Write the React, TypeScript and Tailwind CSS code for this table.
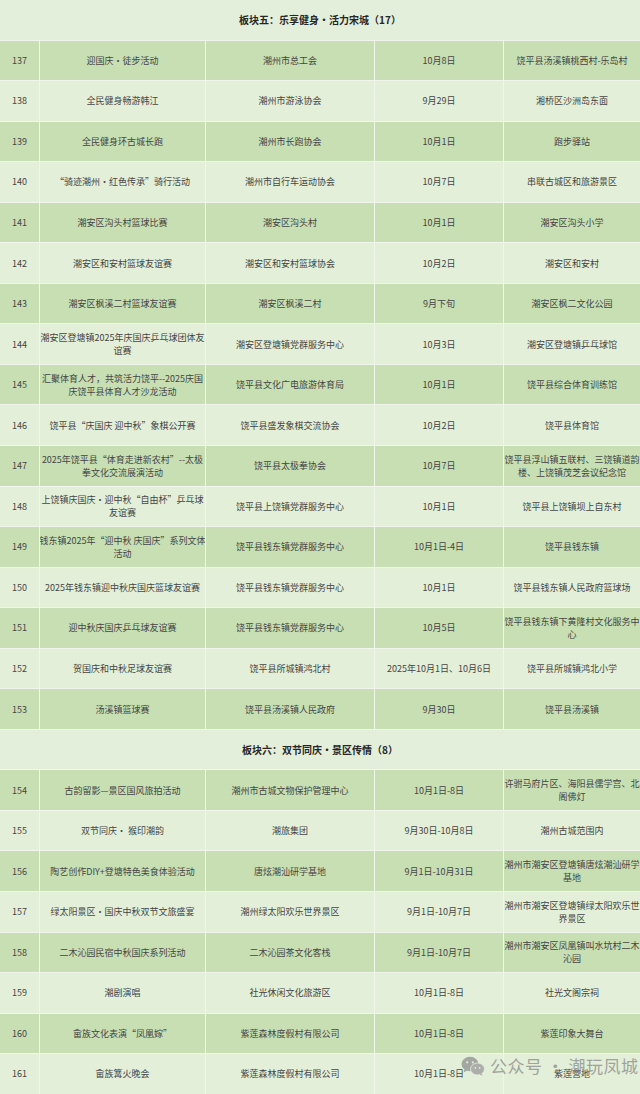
import React from "react";

type Row = [string, string, string, string, string];

const sec5: Row[] = [
  ["137", "迎国庆・徒步活动", "潮州市总工会", "10月8日", "饶平县汤溪镇桃西村-乐岛村"],
  ["138", "全民健身畅游韩江", "潮州市游泳协会", "9月29日", "湘桥区沙洲岛东面"],
  ["139", "全民健身环古城长跑", "潮州市长跑协会", "10月1日", "跑步驿站"],
  ["140", "“骑迹潮州・红色传承”骑行活动", "潮州市自行车运动协会", "10月7日", "串联古城区和旅游景区"],
  ["141", "潮安区沟头村篮球比赛", "潮安区沟头村", "10月1日", "潮安区沟头小学"],
  ["142", "潮安区和安村篮球友谊赛", "潮安区和安村篮球协会", "10月2日", "潮安区和安村"],
  ["143", "潮安区枫溪二村篮球友谊赛", "潮安区枫溪二村", "9月下旬", "潮安区枫二文化公园"],
  ["144", "潮安区登塘镇2025年庆国庆乒乓球团体友|谊赛", "潮安区登塘镇党群服务中心", "10月3日", "潮安区登塘镇乒乓球馆"],
  ["145", "汇聚体育人才，共筑活力饶平--2025庆国|庆饶平县体育人才沙龙活动", "饶平县文化广电旅游体育局", "10月1日", "饶平县综合体育训练馆"],
  ["146", "饶平县“庆国庆 迎中秋”象棋公开赛", "饶平县盛发象棋交流协会", "10月2日", "饶平县体育馆"],
  ["147", "2025年饶平县“体育走进新农村”--太极|拳文化交流展演活动", "饶平县太极拳协会", "10月7日", "饶平县浮山镇五联村、三饶镇道韵|楼、上饶镇茂芝会议纪念馆"],
  ["148", "上饶镇庆国庆・迎中秋“自由杯”乒乓球|友谊赛", "饶平县上饶镇党群服务中心", "10月1日", "饶平县上饶镇坝上自东村"],
  ["149", "钱东镇2025年“迎中秋 庆国庆”系列文体|活动", "饶平县钱东镇党群服务中心", "10月1日-4日", "饶平县钱东镇"],
  ["150", "2025年钱东镇迎中秋庆国庆篮球友谊赛", "饶平县钱东镇党群服务中心", "10月1日", "饶平县钱东镇人民政府篮球场"],
  ["151", "迎中秋庆国庆乒乓球友谊赛", "饶平县钱东镇党群服务中心", "10月5日", "饶平县钱东镇下黄隆村文化服务中|心"],
  ["152", "贺国庆和中秋足球友谊赛", "饶平县所城镇鸿北村", "2025年10月1日、10月6日", "饶平县所城镇鸿北小学"],
  ["153", "汤溪镇篮球赛", "饶平县汤溪镇人民政府", "9月30日", "饶平县汤溪镇"],
];

const sec6: Row[] = [
  ["154", "古韵留影—景区国风旅拍活动", "潮州市古城文物保护管理中心", "10月1日-8日", "许驸马府片区、海阳县儒学宫、北|阁佛灯"],
  ["155", "双节同庆・ 猴印潮韵", "潮旅集团", "9月30日-10月8日", "潮州古城范围内"],
  ["156", "陶艺创作DIY+登塘特色美食体验活动", "唐炫潮汕研学基地", "9月1日-10月31日", "潮州市潮安区登塘镇唐炫潮汕研学|基地"],
  ["157", "绿太阳景区・国庆中秋双节文旅盛宴", "潮州绿太阳欢乐世界景区", "9月1日-10月7日", "潮州市潮安区登塘镇绿太阳欢乐世|界景区"],
  ["158", "二木沁园民宿中秋国庆系列活动", "二木沁园茶文化客栈", "9月1日-10月7日", "潮州市潮安区凤凰镇叫水坑村二木|沁园"],
  ["159", "潮剧演唱", "社光休闲文化旅游区", "10月1日-8日", "社光文阁宗祠"],
  ["160", "畲族文化表演“凤凰嫁”", "紫莲森林度假村有限公司", "10月1日-8日", "紫莲印象大舞台"],
  ["161", "畲族篝火晚会", "紫莲森林度假村有限公司", "10月1日-8日", "紫莲营地"],
];

function Text({ s }: { s: string }) {
  const parts = s.split("|");
  return (
    <span className="text-center">
      {parts.map((p, i) => (
        <React.Fragment key={i}>
          {i > 0 && <br />}
          {p}
        </React.Fragment>
      ))}
    </span>
  );
}

function DataRow({ r, dark }: { r: Row; dark: boolean }) {
  const bg = dark ? "bg-[#c7dfb3]" : "bg-[#e3efd8]";
  return (
    <div className="grid grid-cols-[39px_165px_168px_128px_136px] gap-px h-[39.55px]">
      {r.map((c, i) => (
        <div
          key={i}
          className={`${bg} flex items-center justify-center text-[9px] leading-[13px] text-[#454545] whitespace-nowrap overflow-hidden`}
        >
          <Text s={c} />
        </div>
      ))}
    </div>
  );
}

function Header({ title }: { title: string }) {
  return (
    <div className="h-[39.55px] bg-[#e4efdb] flex items-center justify-center text-[10px] font-bold text-[#262626]">
      {title}
    </div>
  );
}

function WeChatIcon() {
  return (
    <svg width="24" height="20" viewBox="0 0 24 20">
      <ellipse cx="9" cy="8" rx="8.5" ry="7.2" fill="#8f8f8f" />
      <path d="M3.5 13 L2.5 16.5 L6.5 14.3 Z" fill="#8f8f8f" />
      <circle cx="6.2" cy="6.3" r="1.1" fill="#e3efd8" />
      <circle cx="11.8" cy="6.3" r="1.1" fill="#e3efd8" />
      <ellipse cx="16.5" cy="13" rx="7" ry="6" fill="#9a9a9a" stroke="#e3efd8" strokeWidth="0.8" />
      <path d="M20.5 17.5 L21.5 19.8 L18.5 18.4 Z" fill="#9a9a9a" />
      <circle cx="14.3" cy="11.8" r="0.9" fill="#e3efd8" />
      <circle cx="18.7" cy="11.8" r="0.9" fill="#e3efd8" />
    </svg>
  );
}

export default function App() {
  return (
    <div
      className="relative w-[640px] h-[1094px] bg-[#f0f6ec] flex flex-col gap-px overflow-hidden"
      style={{ fontFamily: '"Noto Sans CJK SC", "Noto Sans", sans-serif' }}
    >
      <Header title="板块五：乐享健身・活力宋城（17）" />
      {sec5.map((r, i) => (
        <DataRow key={r[0]} r={r} dark={i % 2 === 0} />
      ))}
      <Header title="板块六：双节同庆・景区传情（8）" />
      {sec6.map((r, i) => (
        <DataRow key={r[0]} r={r} dark={i % 2 === 0} />
      ))}
      <div className="absolute left-[461px] top-[1053px] flex items-center gap-[5px] opacity-75">
        <WeChatIcon />
        <span className="text-[17px] text-[#8a8a8a] tracking-[0.5px]">公众号 · 潮玩凤城</span>
      </div>
    </div>
  );
}
